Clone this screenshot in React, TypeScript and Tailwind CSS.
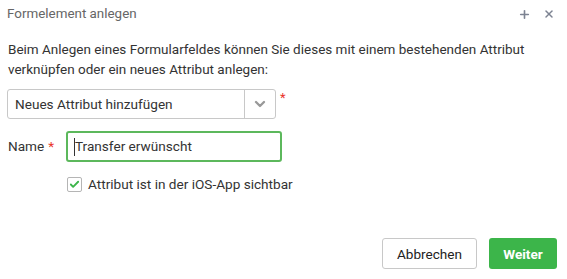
import { Check, ChevronDown, Plus, X } from "lucide-react";

const App = () => {
  const font = { fontFamily: "Roboto, 'Liberation Sans', sans-serif" };

  return (
    <div className="w-[567px] h-[279px] bg-white text-[#333] overflow-hidden" style={font}>
      <div className="flex items-center h-[27px] pl-[7px] pr-3 pt-px">
        <p className="text-[13.4px] text-[#666]">Formelement anlegen</p>
        <div className="ml-auto flex items-center gap-[12px] text-[#7d8392]">
          <Plus size={13} strokeWidth={3} />
          <X size={12} strokeWidth={3} />
        </div>
      </div>
      <div className="pl-2 pt-[12px]">
        <p className="text-[13.5px] leading-[20px] w-[540px]">
          Beim Anlegen eines Formularfeldes können Sie dieses mit einem bestehenden Attribut
          verknüpfen oder ein neues Attribut anlegen:
        </p>
        <div className="flex items-start mt-[10px] -ml-px">
          <div className="w-[269px] h-[30px] border border-[#c8c8c8] rounded-[3px] flex items-center">
            <p className="text-[13.6px] pl-[7px] flex-1">Neues Attribut hinzufügen</p>
            <div className="w-[31px] h-full border-l border-[#c8c8c8] flex items-center justify-center text-[#999]">
              <ChevronDown size={16} strokeWidth={3.5} />
            </div>
          </div>
          <span className="text-[#e9352b] text-[13px] ml-[4px] -mt-[1px]">*</span>
        </div>
        <div className="flex items-center mt-[12px]">
          <p className="text-[13.6px] w-[58px]">
            Name<span className="text-[#e9352b] ml-[4px]">*</span>
          </p>
          <div className="w-[216px] h-[31px] border-2 border-[#5cb85c] rounded-[3px] flex items-center pl-[6px]">
            <span className="w-px h-[18px] bg-[#333]"></span>
            <p className="text-[13.6px]">Transfer erwünscht</p>
          </div>
        </div>
        <div className="flex items-center ml-[59px] mt-[12px]">
          <div className="w-[15px] h-[15px] border border-[#b5b5b5] rounded-[2px] flex items-center justify-center text-[#3cb54a]">
            <Check size={11} strokeWidth={4} />
          </div>
          <p className="text-[13.6px] ml-[6px]">Attribut ist in der iOS-App sichtbar</p>
        </div>
      </div>
      <div className="flex justify-end gap-[12px] pr-[10px] mt-[44px]">
        <button className="w-[95px] h-[31px] border border-[#c8c8c8] rounded-[3px] text-[13.6px] text-[#222] bg-white">
          Abbrechen
        </button>
        <button className="w-[68px] h-[31px] rounded-[3px] text-[13.6px] font-bold text-white bg-[#3cb54a]">
          Weiter
        </button>
      </div>
    </div>
  );
};

export default App;
